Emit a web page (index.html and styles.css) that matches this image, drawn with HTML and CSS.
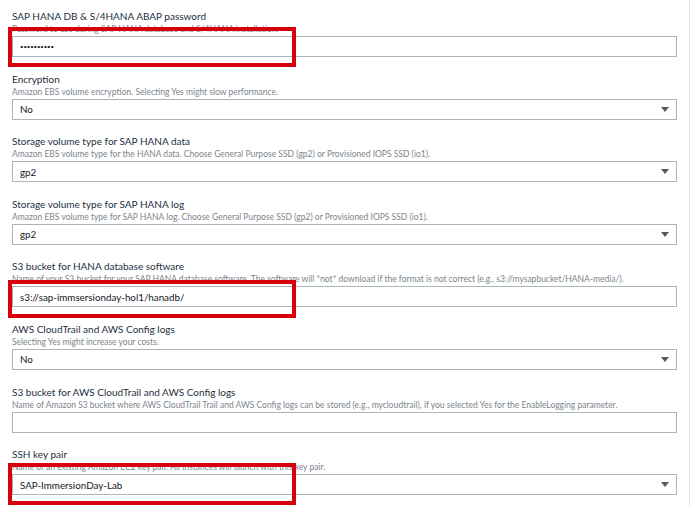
FILE: index.html
```html
<!DOCTYPE html>
<html>
<head>
<meta charset="utf-8">
<link rel="stylesheet" href="styles.css">
</head>
<body>
<div class="page">
  <div class="field">
    <div class="label">SAP HANA DB &amp; S/4HANA ABAP password</div>
    <div class="desc">Password to use during SAP HANA database and S/4HANA installation.</div>
    <div class="control">
      <div class="input"><span class="dots">••••••••••</span></div>
      <div class="mark mark-a"></div>
    </div>
  </div>
  <div class="field">
    <div class="label">Encryption</div>
    <div class="desc">Amazon EBS volume encryption. Selecting Yes might slow performance.</div>
    <div class="control">
      <div class="input select">No<span class="arrow"></span></div>
    </div>
  </div>
  <div class="field">
    <div class="label">Storage volume type for SAP HANA data</div>
    <div class="desc">Amazon EBS volume type for the HANA data. Choose General Purpose SSD (gp2) or Provisioned IOPS SSD (io1).</div>
    <div class="control">
      <div class="input select">gp2<span class="arrow"></span></div>
    </div>
  </div>
  <div class="field">
    <div class="label">Storage volume type for SAP HANA log</div>
    <div class="desc">Amazon EBS volume type for SAP HANA log. Choose General Purpose SSD (gp2) or Provisioned IOPS SSD (io1).</div>
    <div class="control">
      <div class="input select">gp2<span class="arrow"></span></div>
    </div>
  </div>
  <div class="field">
    <div class="label">S3 bucket for HANA database software</div>
    <div class="desc">Name of your S3 bucket for your SAP HANA database software. The software will *not* download if the format is not correct (e.g., s3://mysapbucket/HANA-media/).</div>
    <div class="control">
      <div class="input">s3://sap-immsersionday-hol1/hanadb/</div>
      <div class="mark mark-b"></div>
    </div>
  </div>
  <div class="field">
    <div class="label">AWS CloudTrail and AWS Config logs</div>
    <div class="desc">Selecting Yes might increase your costs.</div>
    <div class="control">
      <div class="input select">No<span class="arrow"></span></div>
    </div>
  </div>
  <div class="field">
    <div class="label">S3 bucket for AWS CloudTrail and AWS Config logs</div>
    <div class="desc">Name of Amazon S3 bucket where AWS CloudTrail Trail and AWS Config logs can be stored (e.g., mycloudtrail), if you selected Yes for the EnableLogging parameter.</div>
    <div class="control">
      <div class="input"></div>
    </div>
  </div>
  <div class="field">
    <div class="label">SSH key pair</div>
    <div class="desc">Name of an existing Amazon EC2 key pair. All instances will launch with this key pair.</div>
    <div class="control">
      <div class="input select">SAP-ImmersionDay-Lab<span class="arrow"></span></div>
      <div class="mark mark-c"></div>
    </div>
  </div>
</div>
</body>
</html>
```
FILE: styles.css
```css
html, body {
  margin: 0;
  padding: 0;
  background: #ffffff;
}
body {
  font-family: Lato, "Open Sans", sans-serif;
  overflow: hidden;
}
.page {
  width: 690px;
  height: 506px;
  box-sizing: border-box;
  border-right: 1px solid #e4e6e6;
  padding: 10px 0 0 12px;
  overflow: hidden;
}
.field {
  width: 665px;
  margin-bottom: 15.6px;
}
.label {
  font-size: 10px;
  line-height: 13px;
  height: 13px;
  color: #232f3e;
  white-space: nowrap;
}
.desc {
  font-size: 8.5px;
  line-height: 12px;
  height: 12px;
  padding-bottom: 1px;
  color: #7d858d;
  white-space: nowrap;
}
.control {
  position: relative;
}
.input {
  height: 21px;
  box-sizing: border-box;
  border: 1px solid #aab7b8;
  background: #fff;
  padding: 0 0 0 7px;
  display: flex;
  align-items: center;
  font-size: 9.8px;
  color: #16191f;
}
.select {
  justify-content: space-between;
  padding-right: 7px;
}
.dots {
  font-size: 6px;
  letter-spacing: -0.1px;
  color: #16191f;
}
.arrow {
  width: 0;
  height: 0;
  border-left: 4.5px solid transparent;
  border-right: 4.5px solid transparent;
  border-top: 5px solid #545b64;
}
.mark {
  position: absolute;
  left: -4px;
  width: 288px;
  box-sizing: border-box;
  border: 4px solid #d9000d;
}
.mark-a {
  top: -9px;
  height: 40px;
}
.mark-b {
  top: -6px;
  height: 38px;
}
.mark-c {
  top: -11px;
  height: 42px;
}
```
